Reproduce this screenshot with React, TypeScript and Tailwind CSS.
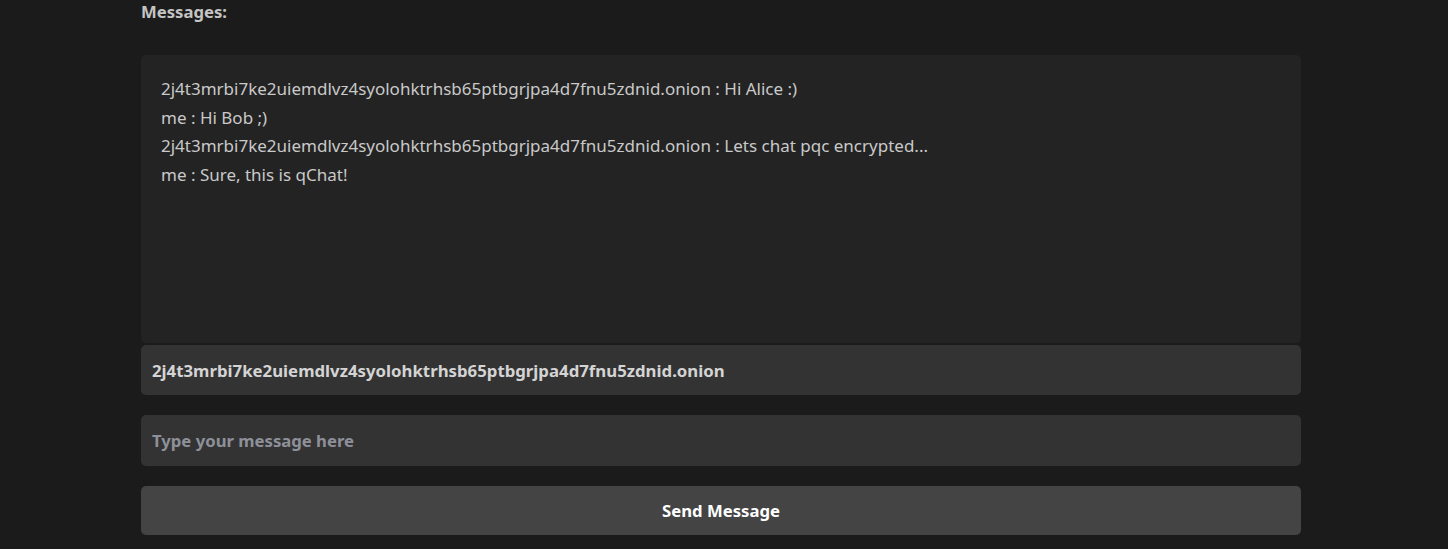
import { useState } from "react";

const peer = "2j4t3mrbi7ke2uiemdlvz4syolohktrhsb65ptbgrjpa4d7fnu5zdnid.onion";

const messages = [
  { from: peer, text: "Hi Alice :)" },
  { from: "me", text: "Hi Bob ;)" },
  { from: peer, text: "Lets chat pqc encrypted..." },
  { from: "me", text: "Sure, this is qChat!" },
];

export default function App() {
  const [recipient, setRecipient] = useState(peer);
  const [draft, setDraft] = useState("");

  return (
    <div className="min-h-[549px] w-full bg-[#1b1b1b] font-['Noto_Sans',sans-serif]">
      <div className="ml-[141px] flex w-[1160px] flex-col">
        <div className="h-[24px] text-[16.7px] font-bold leading-[24px] text-[#c4c4c4]">Messages:</div>
        <div className="mt-[31px] h-[288px] rounded-[5px] bg-[#232323] px-[20px] pt-[20px] text-[17px] text-[#c9c9c9]">
          {messages.map((m, i) => (
            <div key={i} className="leading-[28.7px]">
              {m.from} : {m.text}
            </div>
          ))}
        </div>
        <input
          value={recipient}
          onChange={(e) => setRecipient(e.target.value)}
          className="mt-[2px] h-[50px] rounded-[5px] bg-[#333333] px-[11px] text-[16.8px] font-bold text-[#d4d4d4] outline-none"
        />
        <input
          value={draft}
          onChange={(e) => setDraft(e.target.value)}
          placeholder="Type your message here"
          className="mt-[20px] h-[51px] rounded-[5px] bg-[#333333] px-[11px] text-[16.7px] font-bold text-[#d4d4d4] outline-none placeholder:text-[#8e9099]"
        />
        <button className="mt-[20px] h-[49px] rounded-[5px] bg-[#444444] text-[16.7px] font-bold text-white">
          Send Message
        </button>
      </div>
    </div>
  );
}
